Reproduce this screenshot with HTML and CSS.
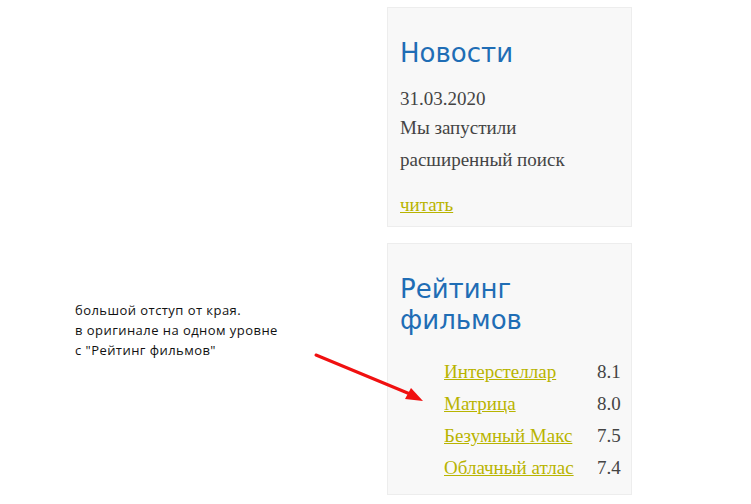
FILE: index.html
```html
<!DOCTYPE html>
<html lang="ru">
<head>
    <meta charset="UTF-8">
    <meta name="viewport" content="width=device-width, initial-scale=1.0">
    <title>Сайдбар</title>
    <link rel="stylesheet" href="styles.css">
</head>
<body>

<div class="page">
    <!-- Annotation column -->
    <div class="note">
        <p>большой отступ от края.<br>в оригинале на одном уровне<br>с "Рейтинг фильмов"</p>
    </div>

    <!-- Sidebar -->
    <div class="sidebar">
        <div class="widget news">
            <h2>Новости</h2>
            <div class="date">31.03.2020</div>
            <p class="text">Мы запустили расширенный поиск</p>
            <a href="#" class="more">читать</a>
        </div>

        <div class="widget rating">
            <h2>Рейтинг фильмов</h2>
            <ul class="films">
                <li><a href="#">Интерстеллар</a><span>8.1</span></li>
                <li><a href="#">Матрица</a><span>8.0</span></li>
                <li><a href="#">Безумный Макс</a><span>7.5</span></li>
                <li><a href="#">Облачный атлас</a><span>7.4</span></li>
            </ul>
        </div>
    </div>
</div>

<svg class="arrow" width="751" height="504" viewBox="0 0 751 504">
    <line x1="316" y1="355" x2="410" y2="394" stroke="#f01010" stroke-width="3" stroke-linecap="round"/>
    <polygon points="423,401 405,399 411,388" fill="#f01010"/>
</svg>

</body>
</html>
```

FILE: styles.css
```css
body {
    margin: 0;
    padding: 0;
    background: #fff;
    font-family: "Liberation Serif", serif;
}
.page {
    display: grid;
    grid-template-columns: 387px 245px;
    padding-top: 7px;
}
.note {
    padding-top: 293px;
    padding-left: 75px;
}
.note p {
    margin: 0;
    font-family: "Open Sans", sans-serif;
    font-size: 13px;
    line-height: 20px;
    letter-spacing: 0.45px;
    color: #111;
}
.sidebar {
    display: flex;
    flex-direction: column;
    gap: 16px;
}
.widget {
    background: #f8f8f8;
    border: 1px solid #ededed;
    padding: 0 12px;
}
.widget h2 {
    font-family: "DejaVu Sans", sans-serif;
    font-weight: normal;
    font-size: 26px;
    line-height: 31px;
    color: #1f6db5;
    margin: 0;
}
.news {
    height: 218px;
}
.news h2 {
    margin-top: 30px;
    margin-bottom: 17px;
}
.date, .text {
    font-size: 19px;
    color: #444;
}
.date {
    line-height: 26px;
}
.text {
    margin: 0 0 18px;
    line-height: 32px;
}
a {
    color: #b8b400;
}
.more {
    font-size: 19px;
}
.rating {
    height: 250px;
}
.rating h2 {
    margin-top: 30px;
}
.films {
    list-style: none;
    margin: 20px 0 0;
    padding: 0 0 0 44px;
}
.films li {
    display: grid;
    grid-template-columns: 153px auto;
    font-size: 19px;
    line-height: 32px;
    color: #444;
}
.arrow {
    position: absolute;
    left: 0;
    top: 0;
    pointer-events: none;
}
```
